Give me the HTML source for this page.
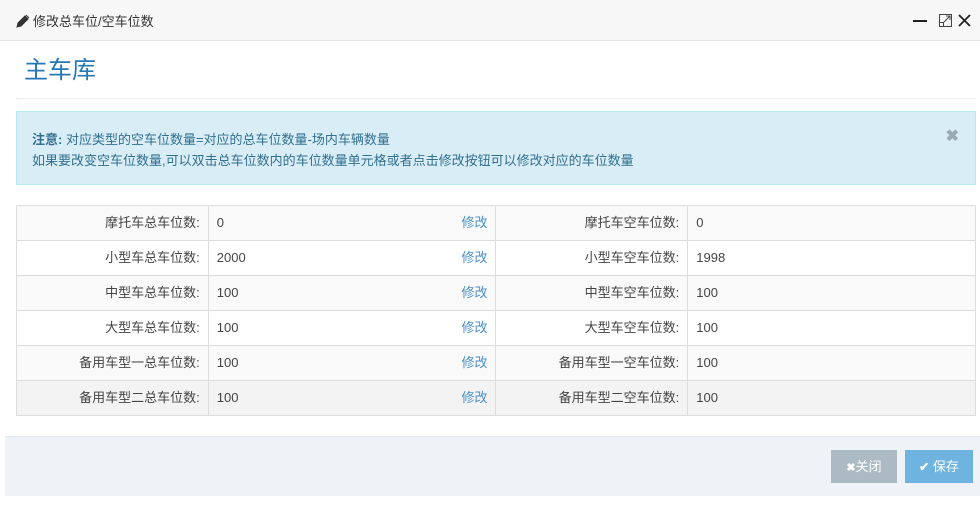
<!DOCTYPE html>
<html><head><meta charset="utf-8"><style>
*{box-sizing:border-box;margin:0;padding:0}
body{width:980px;height:505px;background:#fff;font-family:"Liberation Sans","Noto Sans CJK SC",sans-serif;font-size:13px;color:#393939;position:relative;overflow:hidden}
.hdr{position:absolute;left:0;top:0;width:980px;height:41px;background:#f7f7f7;border-bottom:1px solid #e5e5e5}
.hdr .t{position:absolute;left:16px;top:11px;font-size:13px;color:#333}
.title{position:absolute;left:24px;top:56px;font-size:24px;color:#2679b5;line-height:30px}
.dot{position:absolute;left:16px;top:98px;width:960px;border-top:1px dotted #e2e2e2}
.alert{position:absolute;left:16px;top:111px;width:960px;height:74px;background:#d9edf7;border:1px solid #bce8f1;color:#31708f;padding:17px 15px;line-height:21px;font-size:13px}
.alert .x{position:absolute;right:16px;top:14px;font-size:16px;color:#9aaab4;font-weight:bold}
table{position:absolute;left:16px;top:205px;width:960px;border-collapse:collapse}
td{border:1px solid #ddd;height:35px;padding:0 8px;font-size:13px;color:#444;line-height:34px;vertical-align:middle}
td.l{text-align:right;width:192px}
td.v{width:288px}
td.v2{width:288px}
tr.g td{background:#f9f9f9}
tr.h td{background:#f3f3f3}
.m{float:right;color:#4a90c8}
.ftr{position:absolute;left:5px;top:436px;width:975px;height:60px;background:#eff3f8;border-top:1px solid #e4e9ee}
.btn{position:absolute;top:13px;height:33px;color:#fff;font-size:13px;line-height:33px;text-align:center}
</style></head><body>
<div class="hdr"><span class="t"><svg width="14" height="14" viewBox="0 0 14 14" style="vertical-align:-2px;margin-right:3px"><path d="M1 13l1-4 7-7 3 3-7 7z M10 1l3 3" fill="#333" stroke="#333"/></svg>修改总车位/空车位数</span>
<svg style="position:absolute;left:912px;top:13px" width="60" height="16" viewBox="0 0 60 16"><path d="M1 8h14" stroke="#222" stroke-width="2"/><rect x="27.5" y="1.5" width="12" height="12" fill="none" stroke="#444"/><rect x="27.5" y="9.5" width="4" height="4" fill="none" stroke="#444"/><path d="M32 9l6-6M34 3h4v4" stroke="#444" fill="none"/><path d="M47 2l11 11M58 2L47 13" stroke="#222" stroke-width="1.8"/></svg></div>
<div class="title">主车库</div>
<div class="dot"></div>
<div class="alert"><b>注意:</b> 对应类型的空车位数量=对应的总车位数量-场内车辆数量<br>如果要改变空车位数量,可以双击总车位数内的车位数量单元格或者点击修改按钮可以修改对应的车位数量<span class="x">✖</span></div>
<table>
<tr class="g"><td class="l">摩托车总车位数:</td><td class="v"><span class="m">修改</span>0</td><td class="l">摩托车空车位数:</td><td class="v2">0</td></tr>
<tr><td class="l">小型车总车位数:</td><td class="v"><span class="m">修改</span>2000</td><td class="l">小型车空车位数:</td><td class="v2">1998</td></tr>
<tr class="g"><td class="l">中型车总车位数:</td><td class="v"><span class="m">修改</span>100</td><td class="l">中型车空车位数:</td><td class="v2">100</td></tr>
<tr><td class="l">大型车总车位数:</td><td class="v"><span class="m">修改</span>100</td><td class="l">大型车空车位数:</td><td class="v2">100</td></tr>
<tr class="g"><td class="l">备用车型一总车位数:</td><td class="v"><span class="m">修改</span>100</td><td class="l">备用车型一空车位数:</td><td class="v2">100</td></tr>
<tr class="h"><td class="l">备用车型二总车位数:</td><td class="v"><span class="m">修改</span>100</td><td class="l">备用车型二空车位数:</td><td class="v2">100</td></tr>
</table>
<div class="ftr">
<div class="btn" style="left:826px;width:66px;background:#abbac3"><b style="font-size:11px">✖</b>关闭</div>
<div class="btn" style="left:900px;width:68px;background:#6fb3e0"><b style="font-size:12px">✔</b> 保存</div>
</div>
</body></html>
